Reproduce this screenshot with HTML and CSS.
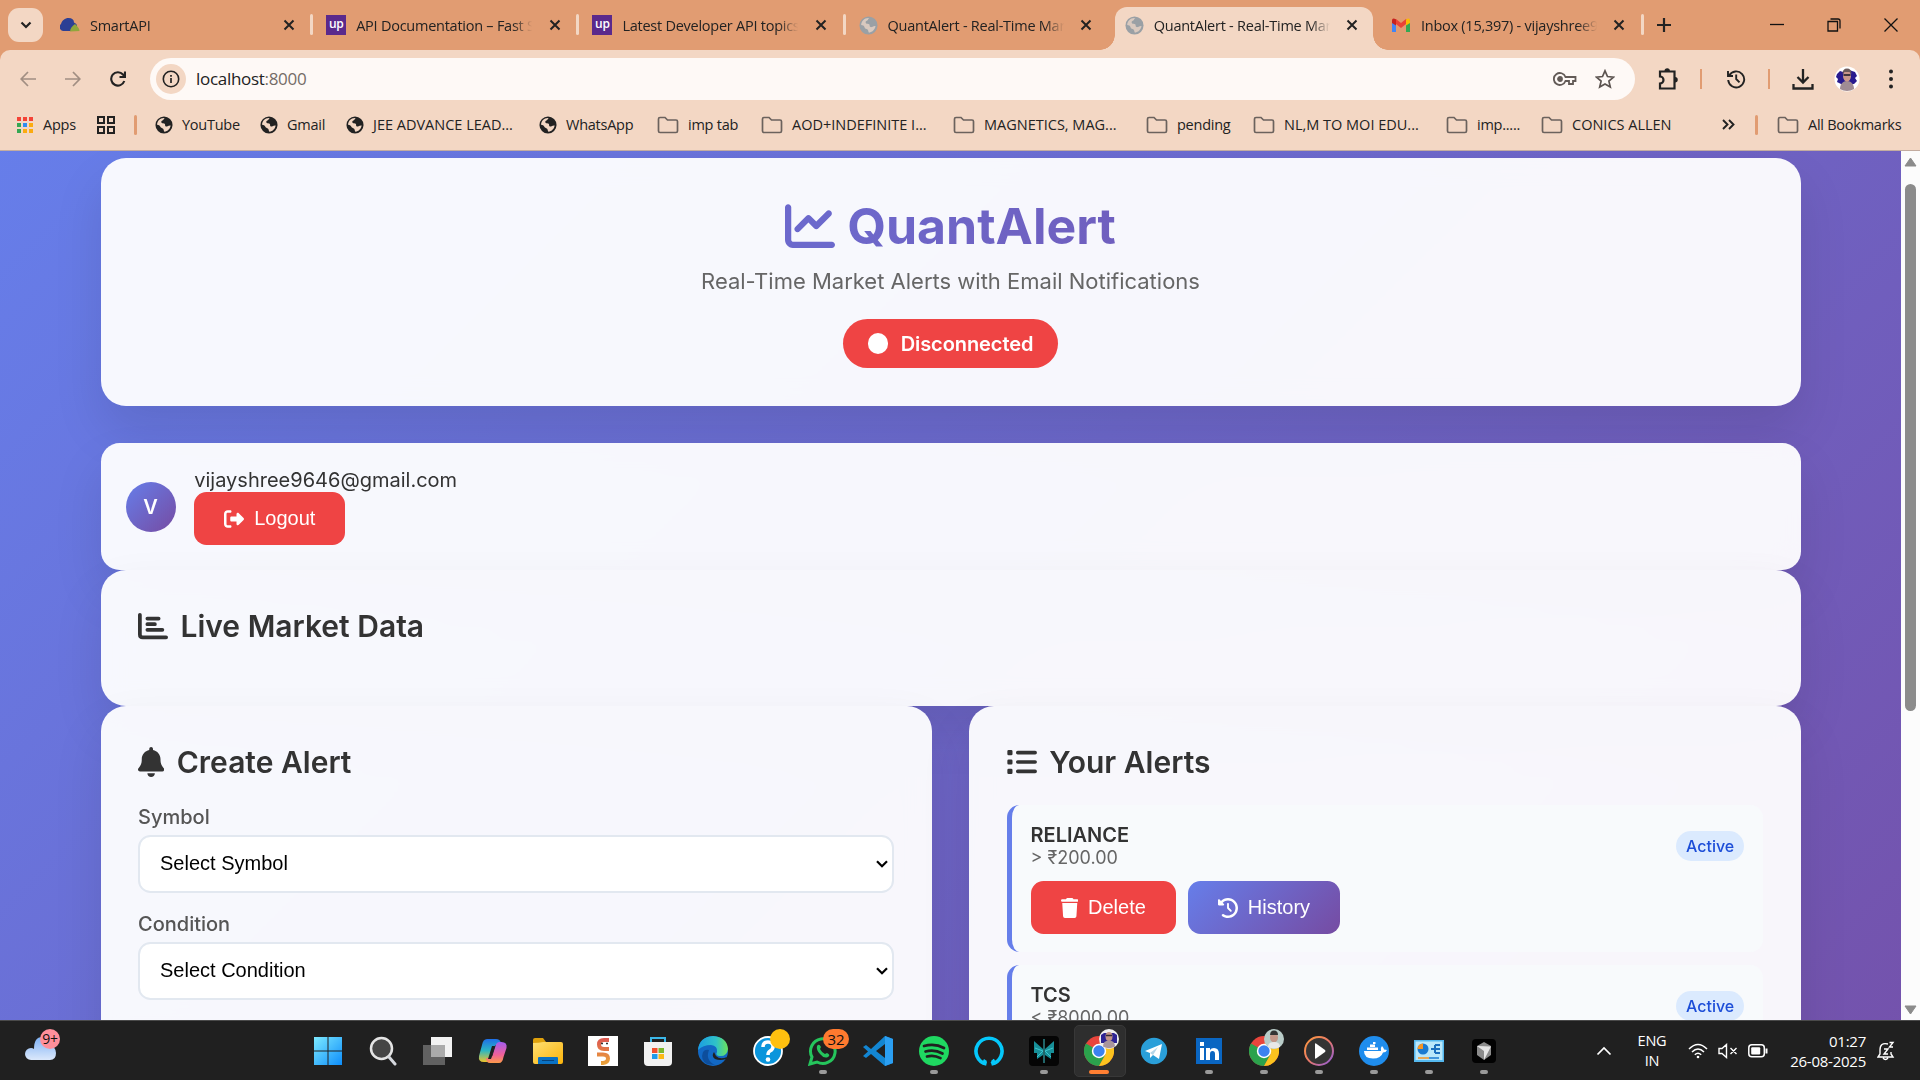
FILE: index.html
```html
<!DOCTYPE html>
<html lang="en">
<head>
<meta charset="utf-8">
<title>QuantAlert - Real-Time Market Alerts</title>
<link rel="stylesheet" href="styles.css">
</head>
<body>
<svg width="0" height="0" class="defs">
  <defs>
    <symbol id="x" viewBox="0 0 12 12"><path d="M1.5 1.5l9 9M10.5 1.5l-9 9" stroke="currentColor" stroke-width="2" fill="none"/></symbol>
    <symbol id="globe" viewBox="0 0 20 20"><circle cx="10" cy="10" r="9.5" fill="currentColor"/><path class="land" d="M11 2.2c-1.7.5-1 2-2.300 2.600-1.500.6-2.200 1.500-1.400 2.700.9 1.100 2.500.2 3.500 1.200.9 1-.2 2.500 1.300 3 1.700.5 2.700-1.700 5.300-1.200-.5 3.300-3 6.500-6.900 7-1-.8-.5-2.300-1.500-3.200-1.100-1-2.900-.8-3.200-2.500-.2-1.500-2-2-3.500-2.200C2.300 5.500 6 1.500 11 2.200z"/></symbol>
    <symbol id="folder" viewBox="0 0 22 18"><path d="M1.500 3q0-1.500 1.500-1.500h5l2.500 2.500H19q1.500 0 1.500 1.500v9.500q0 1.500-1.500 1.500H3q-1.500 0-1.500-1.500z" fill="none" stroke="#6b625d" stroke-width="1.700"/></symbol>
    <symbol id="caret" viewBox="0 0 12 8"><path d="M1 1.300l5 5 5-5" fill="none" stroke="#000" stroke-width="2.200"/></symbol>
    <symbol id="chrome" viewBox="0 0 30 30"><circle cx="15" cy="15" r="15" fill="#e8453c"/><path d="M2 7.500A15 15 0 0 0 15 30l6.500-11.500L15 15z" fill="#2ba24c"/><path d="M15 30A15 15 0 0 0 28 7.500H15l6.500 11z" fill="#fcc31e"/><circle cx="15" cy="15" r="7.200" fill="#fff"/><circle cx="15" cy="15" r="5.700" fill="#3b82f0"/></symbol>
    <symbol id="trash" viewBox="0 0 448 512"><path d="M135 18Q144 0 163 0h122q19 0 28 18l7 14h96q32 0 32 32t-32 32H32Q0 96 0 64t32-32h96zM32 128h384l-21 339q-3 45-48 45H101q-45 0-48-45z" fill="#fff"/></symbol>
    <symbol id="history" viewBox="0 0 512 512"><path fill="#fff" d="M75 75L41 41C25.900 25.900 0 36.600 0 57.900V168c0 13.300 10.700 24 24 24H134.100c21.400 0 32.100-25.900 17-41l-30.800-30.800C155 85.500 203 64 256 64c106 0 192 86 192 192s-86 192-192 192c-40.800 0-78.600-12.700-109.700-34.400c-14.500-10.100-34.400-6.600-44.600 7.900s-6.600 34.400 7.900 44.600C151.200 495 201.700 512 256 512c141.400 0 256-114.600 256-256S397.400 0 256 0C185.300 0 121.300 28.700 75 75zm181 53c-13.300 0-24 10.700-24 24V256c0 6.400 2.500 12.500 7 17l72 72c9.400 9.400 24.600 9.400 33.900 0s9.400-24.600 0-33.900l-65-65V152c0-13.300-10.700-24-24-24z"/></symbol>
    <linearGradient id="win" x1="0" y1="0" x2="1" y2="1"><stop offset="0" stop-color="#7deaff"/><stop offset="1" stop-color="#0d8dfa"/></linearGradient>
    <linearGradient id="cpA" x1="0" y1="0" x2="0" y2="1"><stop offset="0" stop-color="#1f6fe8"/><stop offset=".5" stop-color="#2bb6c4"/><stop offset="1" stop-color="#ecc52c"/></linearGradient>
    <linearGradient id="cpB" x1="0" y1="0" x2="0" y2="1"><stop offset="0" stop-color="#a35cf0"/><stop offset=".6" stop-color="#f0609a"/><stop offset="1" stop-color="#fc9a4a"/></linearGradient>
    <linearGradient id="fold" x1="0" y1="0" x2="1" y2="1"><stop offset="0" stop-color="#ffdf72"/><stop offset="1" stop-color="#fbb40a"/></linearGradient>
    <linearGradient id="edgeA" x1="0" y1="0" x2="1" y2="0"><stop offset="0" stop-color="#1b9de2"/><stop offset=".6" stop-color="#2fc2c8"/><stop offset="1" stop-color="#6ce25a"/></linearGradient>
    <linearGradient id="ring" x1="0" y1="0" x2="1" y2="1"><stop offset="0" stop-color="#ff9a3c"/><stop offset=".5" stop-color="#e8786a"/><stop offset="1" stop-color="#8a5be0"/></linearGradient>
    <linearGradient id="cloud" x1="0" y1="0" x2="0" y2="1"><stop offset="0" stop-color="#7fb2f5"/><stop offset="1" stop-color="#dbe8fb"/></linearGradient>
    <linearGradient id="hn" x1="0" y1="0" x2="0" y2="1"><stop offset="0" stop-color="#dd5a50"/><stop offset="1" stop-color="#eaa03a"/></linearGradient>
  </defs>
</svg>

<div class="screen">
  <div class="tabstrip">
    <div class="tabsearch"><svg width="12" height="8" viewBox="0 0 12 8"><path d="M1.500 1.500L6 6l4.500-4.500" fill="none" stroke="#222" stroke-width="2.200"/></svg></div>
    <div class="tab"><svg class="fav" viewBox="0 0 20 20"><path d="M3 16a4 4 0 0 1-2-7C2 5.500 5 3 8.500 3S14 4.500 14 7.500c3 1 4 4 2 6.500l-3 2z" fill="#2c3f94"/><path d="M10 16.500c0-3 2-5 5-7.500 2 2 4.500 4 4.500 7z" fill="#8fa63c"/></svg><span class="label">SmartAPI</span><svg class="close"><use href="#x"/></svg><i class="sep"></i></div>
    <div class="tab"><span class="fav up">up</span><span class="label">API Documentation – Fast Setup</span><svg class="close"><use href="#x"/></svg><i class="sep"></i></div>
    <div class="tab"><span class="fav up">up</span><span class="label">Latest Developer API topics - Up</span><svg class="close"><use href="#x"/></svg><i class="sep"></i></div>
    <div class="tab"><svg class="fav gray"><use href="#globe"/></svg><span class="label">QuantAlert - Real-Time Market</span><svg class="close"><use href="#x"/></svg></div>
    <div class="tab active"><svg class="fav gray"><use href="#globe"/></svg><span class="label">QuantAlert - Real-Time Market</span><svg class="close"><use href="#x"/></svg></div>
    <div class="tab"><svg class="fav" viewBox="0 0 20 20"><path d="M1 5v12h4V9l5 4 5-4v8h4V5l-4-1-5 4-5-4z" fill="#ea4335"/><path d="M1 7v10h4V9z" fill="#4285f4"/><path d="M15 9v8h4V6z" fill="#34a853"/><path d="M15 4.500q4-2.500 4 1.500v2l-4 2.500z" fill="#fbbc04"/><path d="M1 6q0-4 4-1.500v6L1 8z" fill="#c5221f"/></svg><span class="label">Inbox (15,397) - vijayshree9646</span><svg class="close"><use href="#x"/></svg><i class="sep"></i></div>
    <svg class="plus" width="14" height="14" viewBox="0 0 14 14"><path d="M7 0v14M0 7h14" stroke="#222" stroke-width="2.200"/></svg>
    <div class="winctl">
      <svg width="14" height="14" viewBox="0 0 14 14"><path d="M0 6.500h14" stroke="#111" stroke-width="1.300"/></svg>
      <svg width="14" height="14" viewBox="0 0 14 14"><path d="M1 3.500h9.500V13H1zM3.500 1h7.500q2 0 2 2v7.500" fill="none" stroke="#111" stroke-width="1.300"/></svg>
      <svg width="14" height="14" viewBox="0 0 14 14"><path d="M.5.5l13 13M13.500.5l-13 13" stroke="#111" stroke-width="1.300"/></svg>
    </div>
  </div>

  <div class="toolbar">
    <svg class="nav dim" viewBox="0 0 16 16"><path d="M16 8H1.500M8 1L1.200 8 8 15"/></svg>
    <svg class="nav dim" viewBox="0 0 16 16"><path d="M0 8h14.500M8 1l6.800 7L8 15"/></svg>
    <svg class="nav" viewBox="0 0 16 16"><path d="M14.300 10A6.700 6.700 0 1 1 13 3.500L15 6M15 .5V6H9.500" stroke-width="2.100"/></svg>
    <div class="omnibox">
      <span class="info"><svg width="18" height="18" viewBox="0 0 18 18"><circle cx="9" cy="9" r="7.700" fill="none" stroke="#222" stroke-width="1.600"/><path d="M9 8v5M9 5v1.700" stroke="#222" stroke-width="1.700"/></svg></span>
      <span class="url">localhost<em>:8000</em></span>
      <svg width="24" height="16" viewBox="0 0 24 16" fill="none" stroke="#635b57" stroke-width="1.800"><path d="M12.500 6A6 6 0 1 0 12.500 10H16v3h4v-3h2.500V6z"/><circle cx="7" cy="8" r="2" fill="#635b57"/></svg>
      <svg width="20" height="20" viewBox="0 0 20 20" fill="none" stroke="#5c5450" stroke-width="1.700"><path d="M10 1.800l2.500 5.700 6 .6-4.600 4 1.400 6L10 15l-5.300 3.100 1.400-6-4.600-4 6-.6z"/></svg>
    </div>
    <svg class="puzzle" width="22" height="24" viewBox="0 0 22 24" fill="none" stroke="#222" stroke-width="2.200"><path d="M3 4.500h14.500V21.500H3v-5a3.300 3.300 0 0 0 0-7z"/><path d="M7.500 4a2.700 2.700 0 0 1 5.400 0zM18 10a2.600 2.600 0 0 1 0 5.500z" fill="#222" stroke="none"/></svg>
    <i class="tsep"></i>
    <svg class="hist" width="20" height="20" viewBox="0 0 20 20" fill="none" stroke="#222" stroke-width="1.900"><path d="M3.200 6.500A8 8 0 1 1 2.200 11M2 2v5h5M10.200 5.500V10l3.300 3.300"/></svg>
    <i class="tsep"></i>
    <svg class="down" width="22" height="22" viewBox="0 0 22 22" fill="none" stroke="#222" stroke-width="2.300"><path d="M11 1v13M5.500 9l5.500 5.500L16.500 9M1.500 16v4.500h19V16"/></svg>
    <svg class="me" width="26" height="26" viewBox="0 0 26 26"><circle cx="13" cy="13" r="12.500" fill="#fff"/><path d="M3 8l3-3 3 1 4-3 5 2 3 1 2 4-2 2 2 3-3 3H7l-4-2 1-3-2-2z" fill="#281b8f"/><path d="M6 23c0-5 3-8 7-8s7 3 7 8c-4 2.500-10 2.500-14 0z" fill="#a08c94"/><ellipse cx="13" cy="10" rx="4" ry="5.500" fill="#c9978a"/><path d="M8.500 8q0-5.500 4.500-5.500t4.500 5.500l-2-2h-5z" fill="#6b5a5a"/><path d="M9.500 9h7" stroke="#332b35" stroke-width="1.800"/></svg>
    <svg width="6" height="20" viewBox="0 0 6 20" fill="#222"><circle cx="3" cy="2.500" r="2"/><circle cx="3" cy="10" r="2"/><circle cx="3" cy="17.500" r="2"/></svg>
  </div>

  <div class="bookmarks">
    <span class="bm"><svg width="18" height="18" viewBox="0 0 18 18"><path fill="#f44336" d="M1 1h4v4H1zM7 1h4v4H7zM13 1h4v4h-4z"/><path fill="#34a853" d="M1 7h4v4H1zM1 13h4v4H1z"/><path fill="#2f8cf0" d="M7 7h4v4H7z"/><path fill="#fbab10" d="M13 7h4v4h-4zM7 13h4v4H7zM13 13h4v4h-4z"/></svg>Apps</span>
    <span class="bm"><svg width="20" height="20" viewBox="0 0 20 20" fill="none" stroke="#222" stroke-width="2"><path d="M2 2h6v6H2zM12 2h6v6h-6zM2 12h6v6H2zM12 12h6v6h-6z"/></svg></span>
    <span class="bm"><i class="bsep"></i></span>
    <span class="bm"><svg class="g"><use href="#globe"/></svg>YouTube</span>
    <span class="bm"><svg class="g"><use href="#globe"/></svg>Gmail</span>
    <span class="bm caps"><svg class="g"><use href="#globe"/></svg>JEE ADVANCE LEAD...</span>
    <span class="bm"><svg class="g"><use href="#globe"/></svg>WhatsApp</span>
    <span class="bm"><svg class="f"><use href="#folder"/></svg>imp tab</span>
    <span class="bm caps"><svg class="f"><use href="#folder"/></svg>AOD+INDEFINITE I...</span>
    <span class="bm caps"><svg class="f"><use href="#folder"/></svg>MAGNETICS, MAG...</span>
    <span class="bm"><svg class="f"><use href="#folder"/></svg>pending</span>
    <span class="bm caps"><svg class="f"><use href="#folder"/></svg>NL,M TO MOI EDU...</span>
    <span class="bm"><svg class="f"><use href="#folder"/></svg>imp.....</span>
    <span class="bm caps"><svg class="f"><use href="#folder"/></svg>CONICS ALLEN</span>
    <span class="bm"><svg width="13" height="11" viewBox="0 0 13 11"><path d="M1 1l4.500 4.500L1 10M7 1l4.500 4.500L7 10" fill="none" stroke="#222" stroke-width="1.900"/></svg></span>
    <span class="bm"><i class="bsep"></i></span>
    <span class="bm"><svg class="f"><use href="#folder"/></svg>All Bookmarks</span>
  </div>

  <div class="view">
    <div class="page">
      <header class="card header">
        <h1><svg width="50" height="50" viewBox="0 0 512 512" fill="#6c69cc"><path d="M64 64c0-17.700-14.300-32-32-32S0 46.300 0 64V400c0 44.200 35.800 80 80 80H480c17.700 0 32-14.300 32-32s-14.300-32-32-32H80c-8.800 0-16-7.200-16-16V64zm406.600 86.600c12.500-12.500 12.500-32.800 0-45.300s-32.800-12.500-45.300 0L320 210.700l-57.400-57.400c-12.500-12.500-32.800-12.500-45.300 0l-112 112c-12.500 12.500-12.500 32.800 0 45.300s32.800 12.500 45.300 0L240 221.300l57.400 57.400c12.500 12.500 32.800 12.500 45.300 0l128-128z"/></svg>QuantAlert</h1>
        <p>Real-Time Market Alerts with Email Notifications</p>
        <div class="status"><i></i>Disconnected</div>
      </header>

      <section class="card user">
        <div class="avatar">V</div>
        <div>
          <div class="email">vijayshree9646@gmail.com</div>
          <div class="btn danger"><svg width="20" height="20" viewBox="0 0 512 512"><path fill="#fff" d="M377.900 105.900L500.700 228.700c7.200 7.200 11.300 17.100 11.300 27.300s-4.100 20.100-11.300 27.300L377.900 406.100c-6.400 6.400-15 9.900-24 9.900c-18.700 0-33.900-15.200-33.900-33.900l0-62.100-128 0c-17.700 0-32-14.300-32-32l0-64c0-17.700 14.300-32 32-32l128 0 0-62.100c0-18.700 15.200-33.900 33.900-33.900c9 0 17.600 3.600 24 9.900zM160 96L96 96c-17.700 0-32 14.300-32 32l0 256c0 17.700 14.300 32 32 32l64 0c17.700 0 32 14.300 32 32s-14.300 32-32 32l-64 0c-53 0-96-43-96-96L0 128C0 75 43 32 96 32l64 0c17.700 0 32 14.300 32 32s-14.300 32-32 32z"/></svg>Logout</div>
        </div>
      </section>

      <section class="card">
        <h2><svg width="30" height="30" viewBox="0 0 512 512" fill="none" stroke="#333" stroke-width="64" stroke-linecap="round"><path d="M32 64v336q0 48 48 48h400M160 128h192M160 224h128M160 320h256"/></svg>Live Market Data</h2>
      </section>

      <div class="columns">
        <section class="card">
          <h2><svg width="26.250" height="30" viewBox="0 0 448 512" fill="#333"><path d="M224 0c-17.700 0-32 14.300-32 32V51.200C119 66 64 130.600 64 208v18.800c0 47-17.300 92.400-48.500 127.600l-7.400 8.300c-8.400 9.400-10.400 22.900-5.300 34.400S19.400 416 32 416H416c12.600 0 24-7.400 29.200-18.900s3.100-25-5.300-34.400l-7.400-8.300C401.300 319.200 384 273.900 384 226.800V208c0-77.400-55-142-128-156.800V32c0-17.700-14.300-32-32-32zm45.300 493.300c12-12 18.700-28.300 18.700-45.300H160c0 17 6.700 33.300 18.700 45.300s28.300 18.700 45.300 18.700s33.300-6.700 45.300-18.700z"/></svg>Create Alert</h2>
          <div class="field"><label>Symbol</label><div class="select">Select Symbol<svg width="12" height="8"><use href="#caret"/></svg></div></div>
          <div class="field"><label>Condition</label><div class="select">Select Condition<svg width="12" height="8"><use href="#caret"/></svg></div></div>
        </section>
        <section class="card">
          <h2><svg width="30" height="30" viewBox="0 0 512 512" fill="#333" stroke="#333" stroke-linecap="round"><path d="M184 96h296M184 256h296M184 416h296" stroke-width="62"/><path d="M28 74h44v44H28zM28 234h44v44H28zM28 394h44v44H28z" stroke-width="44" stroke-linejoin="round"/></svg>Your Alerts</h2>
          <article class="alert">
            <div class="top"><div><b>RELIANCE</b><small>&gt; ₹200.00</small></div><span class="badge">Active</span></div>
            <div class="actions"><div class="btn danger"><svg width="17.500" height="20"><use href="#trash"/></svg>Delete</div><div class="btn primary"><svg width="20" height="20"><use href="#history"/></svg>History</div></div>
          </article>
          <article class="alert">
            <div class="top"><div><b>TCS</b><small>&lt; ₹8000.00</small></div><span class="badge">Active</span></div>
            <div class="actions"><div class="btn danger"><svg width="17.500" height="20"><use href="#trash"/></svg>Delete</div><div class="btn primary"><svg width="20" height="20"><use href="#history"/></svg>History</div></div>
          </article>
        </section>
      </div>
    </div>
    <div class="scrollbar">
      <svg width="13" height="10" viewBox="0 0 13 10"><path d="M6.500 1L12 9H1z" fill="#8b8b8b" stroke="#8b8b8b" stroke-linejoin="round"/></svg>
      <i></i>
      <svg class="bottom" width="13" height="10" viewBox="0 0 13 10"><path d="M6.500 9L12 1H1z" fill="#8b8b8b" stroke="#8b8b8b" stroke-linejoin="round"/></svg>
    </div>
  </div>

  <div class="taskbar">
    <div class="weather"><svg width="32" height="26" viewBox="0 0 32 26"><path d="M6 25a6 6 0 0 1 0-12q2 0 3 1Q9 2 17 2q8 0 8 9 6 1 6 7 0 7-6 7z" fill="url(#cloud)"/></svg><b>9+</b></div>
    <div class="apps">
      <span><svg viewBox="0 0 30 30"><path d="M1 1h13.500v13.500H1zM15.500 1H29v13.500H15.500zM1 15.500h13.500V29H1zM15.500 15.500H29V29H15.500z" fill="url(#win)"/></svg></span>
      <span><svg viewBox="0 0 30 30"><circle cx="13.500" cy="12.500" r="10.500" fill="#454545" stroke="#e4e4e4" stroke-width="2.500"/><path d="M21 21l6 7" stroke="#d5d8dd" stroke-width="3" stroke-linecap="round"/></svg></span>
      <span><svg viewBox="0 0 30 30"><path d="M8 1h21v20H8z" fill="#f2f2f2"/><path d="M0 9h22v20H0z" fill="#6d6d6d" opacity=".85"/><path d="M8 9h14v12H8z" fill="#aaa"/></svg></span>
      <span><svg viewBox="0 0 30 30"><path d="M9 3h9q4 0 5 4l.5 2h-5q-2 0-3 4l-2.500 9q-1 4-4 4H6q-6 0-5-6l3-11q1-6 5-6z" fill="url(#cpA)"/><path d="M21 27h-9q-4 0-4-5h4q2 0 3-4l2.500-8q1-4 4-4h2q6 0 5 6l-3 9q-1 6-4.500 6z" fill="url(#cpB)"/><path d="M14 10h3l-4 13h-3z" fill="#202020"/></svg></span>
      <span><svg viewBox="0 0 30 30"><path d="M0 4q0-2 2-2h8l3 4v4H0z" fill="#dfa10c"/><path d="M0 7q6 0 10-1h18q2 0 2 2v18q0 2-2 2H2q-2 0-2-2z" fill="url(#fold)"/><path d="M5 28v-6q0-1 1-1h18q1 0 1 1v6z" fill="#0a72c4"/><path d="M9 24.500h12" stroke="#06437c"/></svg></span>
      <span><svg viewBox="0 0 30 30"><path d="M0 0h30v30H0z" fill="#fff"/><path d="M21 4h-5q-5 0-5 4.500t5 4.500h5M9 18.500h6q5 0 5 4t-5 4.500h-2" fill="none" stroke="url(#hn)" stroke-width="4"/><path d="M13 7.500h2M18 7.500h2" stroke="#333" stroke-width="1.500"/></svg></span>
      <span><svg viewBox="0 0 30 30"><path d="M8 6V2h14v4" fill="none" stroke="#3bb7e8" stroke-width="2"/><path d="M1 6h28v20q0 4-4 4H5q-4 0-4-4z" fill="#f1f1f1"/><path d="M9 12h5.500v5H9z" fill="#f0502e"/><path d="M15.500 12H21v5h-5.500z" fill="#7cb82f"/><path d="M9 18h5.500v5H9z" fill="#1f9bea"/><path d="M15.500 18H21v5h-5.500z" fill="#fbb916"/></svg></span>
      <span><svg viewBox="0 0 30 30"><circle cx="15" cy="15" r="15" fill="#1268c4"/><path d="M0 14Q1 1 15 0q14 1 15 13-1 8-9 7-4-1-2-4 1-6-6-7-8 0-13 5z" fill="url(#edgeA)"/><path d="M18 20q4 4 11 1l-1 2q-6 2-11 0-4-3-1-7z" fill="#202020"/><path d="M11 14q-4 10 6 15l-8-1Q2 24 5 16q2-3 6-2z" fill="#0d4e9c"/></svg></span>
      <span><svg viewBox="0 0 30 30"><circle cx="15" cy="15" r="14" fill="#0a95dc" stroke="#fff" stroke-width="1.800"/><path d="M10 11q0-5 5-5t5 4.500q0 3-3 4.500-2 1-2 4" fill="none" stroke="#fff" stroke-width="3.500"/><circle cx="15" cy="23.500" r="2.300" fill="#fff"/></svg><i class="dotbadge"></i></span>
      <span class="run"><svg viewBox="0 0 30 30"><path d="M2 28l2-7a12.300 12.300 0 1 1 5 5z" fill="none" stroke="#25c55c" stroke-width="3"/><path d="M9 10q2-3 4 1l-1 2q2 4 5 5l2-1q4 2 1 4-4 2-8-3-4-4-3-8z" fill="#25c55c"/></svg><b class="count">32</b></span>
      <span><svg viewBox="0 0 30 30"><path d="M22 0L8 13 3 9 0 11l5 4.500L0 20l3 2 5-4 14 12 8-3V3z" fill="#1386d2"/><path d="M22 0l8 3v24l-8 3z" fill="#2b9ff2"/><path d="M22 8v14l-9-7z" fill="#202020"/></svg></span>
      <span class="run"><svg viewBox="0 0 30 30"><circle cx="15" cy="15" r="15" fill="#1fd861"/><path d="M5 10q11-3 20 2M6.500 15.500q9-2.500 17 2M8 20.500q7-2 13.500 1.700" fill="none" stroke="#202020" stroke-width="2.700" stroke-linecap="round"/></svg></span>
      <span><svg viewBox="0 0 30 30"><path d="M12.500 28A13 13 0 1 1 17.500 28q3-1 1-4 2 2-1 4M12.500 28q-3-1-1-4" fill="none" stroke="#05c8fb" stroke-width="3.600"/></svg></span>
      <span class="run"><svg viewBox="0 0 30 30"><rect width="30" height="30" rx="4" fill="#050505"/><path d="M14 13L5 5v12l3 0v6l6-4zM16 13l9-8v12h-3v6l-6-4z" fill="#178f98"/><path d="M15 3v24M6 12l8 3-6 6M24 12l-8 3 6 6" fill="none" stroke="#3fc6ce" stroke-width="1"/></svg></span>
      <span class="run current"><svg><use href="#chrome"/></svg><svg class="face" viewBox="0 0 20 20"><circle cx="10" cy="10" r="10" fill="#eee"/><path d="M2 6l3-2h10l3 2v8H2z" fill="#2e2494"/><ellipse cx="10" cy="7.500" rx="3.500" ry="4.500" fill="#c39688"/><path d="M4 17.500q0-6 6-6t6 6q-6 3.500-12 0z" fill="#a8959c"/><path d="M7 6.500h6" stroke="#332b35" stroke-width="1.500"/></svg></span>
      <span><svg viewBox="0 0 30 30"><circle cx="15" cy="15" r="13.200" fill="#2a9fd9"/><path d="M6 15l17-7-3 15-6-4-3 3v-5z" fill="#fff"/><path d="M11 17l8-6-5 8z" fill="#b6d6e8"/></svg></span>
      <span class="run"><svg viewBox="0 0 30 30"><path d="M2 2h26v26H2z" fill="#0a66c2"/><path d="M6 12h4v12H6zM6 6h4v4H6zM12 12h4v2q1-2 4-2 5 0 5 6v6h-4v-6q0-3-2.500-3T16 18v6h-4z" fill="#fff"/></svg></span>
      <span class="run"><svg><use href="#chrome"/></svg><svg class="face" viewBox="0 0 20 20"><circle cx="10" cy="10" r="10" fill="#b9ccc8"/><ellipse cx="10" cy="8.500" rx="4" ry="5" fill="#c39688"/><path d="M6 6q0-4.500 4-4.500t4 4.500z" fill="#333"/><path d="M4 18q0-5 6-5t6 5q-6 3-12 0z" fill="#e8e8e8"/></svg></span>
      <span class="run"><svg viewBox="0 0 30 30"><circle cx="15" cy="15" r="14" fill="#343434" stroke="url(#ring)" stroke-width="2"/><path d="M11 8q0-1 1-.5l9 6.500q1 1 0 2l-9 6.500q-1 .5-1-.5z" fill="#fff"/></svg></span>
      <span class="run"><svg viewBox="0 0 30 30"><circle cx="15" cy="15" r="15" fill="#1f8ded"/><path d="M5 15h17q-1-3 1-5 2 2 2 3.500 2 0 3 .5-1 2.500-4 2.500-2 6-10 6-9 0-9-7.500zM8 11.500h11V14H8zM11 8.500h5V11h-5zM14 6h2.500v2H14z" fill="#fff"/></svg></span>
      <span class="run"><svg viewBox="0 0 30 30"><path d="M0 4h30v22H0z" fill="#55b8ee"/><path d="M1.500 5.500h27V24h-27z" fill="#b9e7fa"/><circle cx="9" cy="13" r="5.500" fill="#1b7ad0"/><path d="M9 13V7.500A5.500 5.500 0 0 0 3.500 13z" fill="#f79522"/><path d="M17 13h4m0-4v8M21 9h5M21 13h5M21 17h5" stroke="#1b6fbe" stroke-width="2"/><path d="M4 22h11" stroke="#f79522" stroke-width="1.500"/><path d="M15 22h10" stroke="#1b7ad0" stroke-width="1.500"/></svg></span>
      <span class="run"><svg viewBox="0 0 30 30"><rect x="3" y="3" width="24" height="24" rx="4" fill="#020202"/><path d="M15 6l7 4v9l-7 5-7-5v-9z" fill="#8b8b8b"/><path d="M8 10l14 .500L15 24v-9z" fill="#e5e5e5"/></svg></span>
    </div>
    <div class="tray">
      <svg class="chev" width="16" height="10" viewBox="0 0 16 10"><path d="M1.500 8.500L8 2l6.500 6.500" fill="none" stroke="#fff" stroke-width="1.700"/></svg>
      <div class="lang">ENG<br>IN</div>
      <svg width="20" height="16" viewBox="0 0 20 16" fill="none" stroke="#fff" stroke-width="1.500"><path d="M1 6q9-9 18 0M4 9q6-6 12 0M6.800 11.800q3.200-3 6.400 0"/><circle cx="10" cy="14" r="1.300" fill="#fff" stroke="none"/></svg>
      <svg width="20" height="16" viewBox="0 0 20 16" fill="none" stroke="#fff" stroke-width="1.400"><path d="M1 5.500h3L8.500 1.500v13L4 10.500H1zM12.500 5l6 6M18.500 5l-6 6"/></svg>
      <svg width="20" height="14" viewBox="0 0 20 14"><rect x=".8" y=".8" width="15.500" height="12" rx="3" fill="none" stroke="#fff" stroke-width="1.500"/><rect x="3.200" y="3.200" width="9" height="7.200" rx="1" fill="#fff"/><path d="M18.500 4.500v5" stroke="#fff" stroke-width="2"/></svg>
      <div class="clock">01:27<br>26-08-2025</div>
      <svg width="18" height="20" viewBox="0 0 18 20" fill="none" stroke="#fff" stroke-width="1.400"><path d="M11 3Q3 1 3 9v4l-2 3h15l-2-3v-2M6 17q2.500 3 5 0M7 8h4l-4 5h4M12.500 1.500H16L12.500 6H16"/></svg>
    </div>
  </div>
</div>
</body>
</html>
```

FILE: styles.css
```css
* { box-sizing: border-box; margin: 0; padding: 0; }
body { width: 1920px; height: 1080px; overflow: hidden; font-family: Inter, "Liberation Sans", sans-serif; }
svg { flex: none; display: block; }
.defs { position: absolute; }
.screen { display: flex; flex-direction: column; height: 1080px; background: #e19c72; }

/* browser frame */
.tabstrip, .toolbar, .bookmarks, .taskbar { font-family: "Open Sans", "Noto Sans", sans-serif; font-size: 14.5px; letter-spacing: -.25px; color: #222; }
.tabstrip { display: flex; align-items: center; height: 50px; flex: none; background: #e19c72; padding-left: 8px; }
.tabsearch { width: 35px; height: 34px; border-radius: 11px; background: #f3d7c4; display: flex; align-items: center; justify-content: center; margin-right: 3px; flex: none; }
.tab { position: relative; display: flex; align-items: center; width: 266.2px; height: 50px; padding-left: 14px; flex: none; }
.fav { width: 20px; height: 20px; margin-right: 10px; flex: none; }
svg.gray { width: 19px; height: 19px; color: #9aa0a5; margin-right: 10px; }
.gray { --land: #d9c9bf; }
.up { background: #5a298c; color: #fff; font-size: 12px; font-weight: 600; line-height: 17px; text-align: center; }
.label { width: 178px; overflow: hidden; white-space: nowrap; -webkit-mask-image: linear-gradient(90deg, #000 88%, transparent 99%); mask-image: linear-gradient(90deg, #000 88%, transparent 99%); }
.close { width: 12px; height: 12px; margin-left: 14.5px; }
.sep { position: absolute; right: -1px; top: 14px; width: 3px; height: 21px; border-radius: 2px; background: #f3d7c4; }
.active::before { content: ""; position: absolute; left: 4px; right: 4px; top: 7px; bottom: 0; background: #f3d7c4; border-radius: 12px 12px 0 0; z-index: 0; }
.active::after { content: ""; position: absolute; left: -11px; right: -11px; bottom: 0; height: 15px; background: radial-gradient(circle at 0 0, transparent 14.5px, #f3d7c4 15px) left / 15px 15px no-repeat, radial-gradient(circle at 100% 0, transparent 14.5px, #f3d7c4 15px) right / 15px 15px no-repeat; }
.active > * { position: relative; z-index: 1; }
.plus { margin-left: 13.5px; }
.winctl { margin-left: auto; display: flex; gap: 43px; padding-right: 22px; }
.toolbar { display: flex; align-items: center; height: 57px; flex: none; background: #f3d7c4; border-radius: 10px 10px 0 0; padding-left: 20px; }
.nav { width: 16px; height: 16px; margin-right: 29px; fill: none; stroke: #222; stroke-width: 1.700; }
.nav.dim { stroke: #a18e82; }
.nav:nth-child(3) { margin-right: 24px; }
.omnibox { width: 1485px; height: 42px; border-radius: 21px; background: #fef9f6; display: flex; align-items: center; padding: 0 20px 0 6px; flex: none; }
.info { width: 30px; height: 30px; border-radius: 50%; background: #f3d7c4; display: flex; align-items: center; justify-content: center; }
.url { margin-left: 10px; font-size: 17px; letter-spacing: -.3px; flex: 1; }
.url em { font-style: normal; color: #756c67; }
.omnibox > svg + svg { margin-left: 18px; }
.puzzle { margin-left: 22px; }
.tsep { width: 2px; height: 20px; background: #e19c72; margin: 0 24px 0 21px; }
.hist + .tsep { margin: 0 22px 0 22px; }
.me { margin: 0 28px 0 20px; }
.bookmarks { display: flex; align-items: center; height: 44px; flex: none; background: #f3d7c4; border-bottom: 1px solid #c3aca0; padding: 0 0 8px 16px; white-space: nowrap; }
.bm { display: flex; align-items: center; flex: none; }
.bm.caps { letter-spacing: 0; }
.bm svg { margin-right: 9px; }
.land { fill: var(--land, #f3d7c4); }
.g { width: 18px; height: 18px; }
.f { width: 22px; height: 18px; }
.bsep { width: 3px; height: 20px; border-radius: 2px; background: #e19c72; }
.bm:nth-child(1) { width: 80px; }
.bm:nth-child(2) { width: 38px; }
.bm:nth-child(3) { width: 21px; }
.bm:nth-child(4) { width: 105px; }
.bm:nth-child(5) { width: 86px; }
.bm:nth-child(6) { width: 193px; }
.bm:nth-child(7) { width: 118px; }
.bm:nth-child(8) { width: 104px; }
.bm:nth-child(9) { width: 192px; }
.bm:nth-child(10) { width: 193px; }
.bm:nth-child(11) { width: 107px; }
.bm:nth-child(12) { width: 193px; }
.bm:nth-child(13) { width: 95px; }
.bm:nth-child(14) { width: 181px; }
.bm:nth-child(15) { width: 33px; }
.bm:nth-child(16) { width: 22px; }

/* web page */
.view { display: flex; height: 869px; flex: none; overflow: hidden; }
.page { width: 1901px; padding: 7px 100.500px 0; background: linear-gradient(135deg, #667eea, #764ba2) 0 -18px / 1901px 1367px; overflow: hidden; flex: none; }
.card { background: rgba(255, 255, 255, .95); border-radius: 25px; padding: 37.500px; box-shadow: 0 25px 50px rgba(0, 0, 0, .1); backdrop-filter: blur(12.500px); }
.header { height: 248px; margin-bottom: 37px; text-align: center; }
h1 { display: flex; justify-content: center; align-items: center; gap: 12px; font-size: 50px; line-height: 60.500px; font-weight: 700; margin-bottom: 11.500px; background: linear-gradient(135deg, #667eea, #764ba2); -webkit-background-clip: text; background-clip: text; color: transparent; }
.header p { font-size: 22px; line-height: 26.600px; color: #666; }
.status { display: inline-flex; align-items: center; gap: 12.500px; margin-top: 25px; height: 49px; padding: 0 25px; border-radius: 31px; background: #ef4444; color: #fff; font-size: 20px; font-weight: 600; letter-spacing: -.08px; }
.status i { width: 20.500px; height: 20.500px; border-radius: 50%; background: #fff; }
.user { display: flex; align-items: center; gap: 18.750px; padding: 25px; border-radius: 18.750px; height: 127px; }
.avatar { width: 50px; height: 50px; border-radius: 50%; background: linear-gradient(135deg, #667eea, #764ba2); color: #fff; font-size: 20px; font-weight: 600; display: flex; align-items: center; justify-content: center; }
.email { font-size: 20px; line-height: 24px; color: #333; }
.btn { display: inline-flex; align-items: center; gap: 10px; height: 53px; padding: 0 30px; border-radius: 12.500px; color: #fff; font: 20px "Liberation Sans", Arial, sans-serif; }
.danger { background: #ef4444; }
.primary { background: linear-gradient(135deg, #667eea, #764ba2); }
h2 { display: flex; align-items: center; gap: 12.500px; font-size: 30px; line-height: 36px; font-weight: 600; color: #333; margin-bottom: 25px; }
.columns { display: grid; grid-template-columns: 1fr 1fr; gap: 37.500px; }
.columns .card { height: 640px; }
.field { margin-bottom: 18.750px; }
.field label { display: block; font-size: 20px; line-height: 24.200px; font-weight: 500; color: #555; margin-bottom: 6.250px; }
.select { display: flex; align-items: center; justify-content: space-between; height: 57.800px; background: #fff; border: 2px solid #e2e8f0; border-radius: 12.500px; padding: 0 4px 0 20px; font: 20px "Liberation Sans", Arial, sans-serif; color: #000; }
.alert { height: 147.500px; background: #f8fafc; border-left: 5px solid #667eea; border-radius: 12.500px; padding: 18.250px 18.750px; margin-bottom: 12.500px; }
.top { display: flex; justify-content: space-between; align-items: center; margin-bottom: 12.500px; }
.top b { display: block; font-size: 20px; line-height: 24px; font-weight: 600; color: #333; }
.top small { display: block; font-size: 18px; line-height: 21.800px; color: #666; }
.badge { font-size: 16px; line-height: 20px; font-weight: 500; color: #1d4ed8; background: #dbeafe; padding: 5px 10px; border-radius: 25px; }
.actions { display: flex; gap: 12px; }
.scrollbar { width: 19px; background: #fcfcfc; display: flex; flex-direction: column; align-items: center; padding: 6px 0 5px; }
.scrollbar i { width: 11px; height: 527px; margin-top: 17px; border-radius: 6px; background: #8b8b8b; }
.scrollbar .bottom { margin-top: auto; }

/* taskbar */
.taskbar { display: flex; height: 60px; flex: none; background: #202020; border-top: 1px solid #4a4a4a; color: #fff; }
.weather { position: relative; width: 300.500px; padding: 14px 0 0 25px; flex: none; }
.weather b { position: absolute; left: 40px; top: 8px; width: 20px; height: 20px; border-radius: 50%; background: #ff8f9b; color: #111; font-size: 14px; font-weight: 400; line-height: 20px; text-align: center; }
.apps { display: flex; }
.apps span { position: relative; width: 55.050px; height: 59px; display: flex; align-items: center; justify-content: center; }
.apps svg { width: 30px; height: 30px; position: relative; }
.apps .run::after { content: ""; position: absolute; bottom: 6px; left: 50%; width: 8px; height: 4px; margin-left: -4px; border-radius: 2px; background: #9a9a9a; }
.apps .current::before { content: ""; position: absolute; left: 2.500px; top: 4px; width: 50px; height: 50px; border-radius: 5px; background: #2e2e2e; border: 1px solid #383838; }
.apps .current::after { width: 20px; margin-left: -10px; background: #ff7f32; }
.apps .face { position: absolute; left: 28px; top: 8px; width: 20px; height: 20px; }
.dotbadge { position: absolute; left: 29px; top: 8px; width: 20px; height: 20px; border-radius: 50%; background: #ffc00f; }
.count { position: absolute; left: 27px; top: 8px; width: 26px; height: 20px; border-radius: 10px; background: #ff7a2f; color: #111; font-weight: 400; font-size: 15px; line-height: 20px; text-align: center; }
.tray { display: flex; align-items: center; margin-left: auto; padding-right: 25px; line-height: 20px; }
.chev { margin-right: 25px; }
.lang { width: 30px; text-align: center; margin-right: 21px; }
.tray > svg:not(.chev) { margin-right: 10px; }
.clock { width: 88px; text-align: right; margin-right: 11px; font-size: 15px; }
.tray > svg:last-child { margin-right: 0 !important; }
```
